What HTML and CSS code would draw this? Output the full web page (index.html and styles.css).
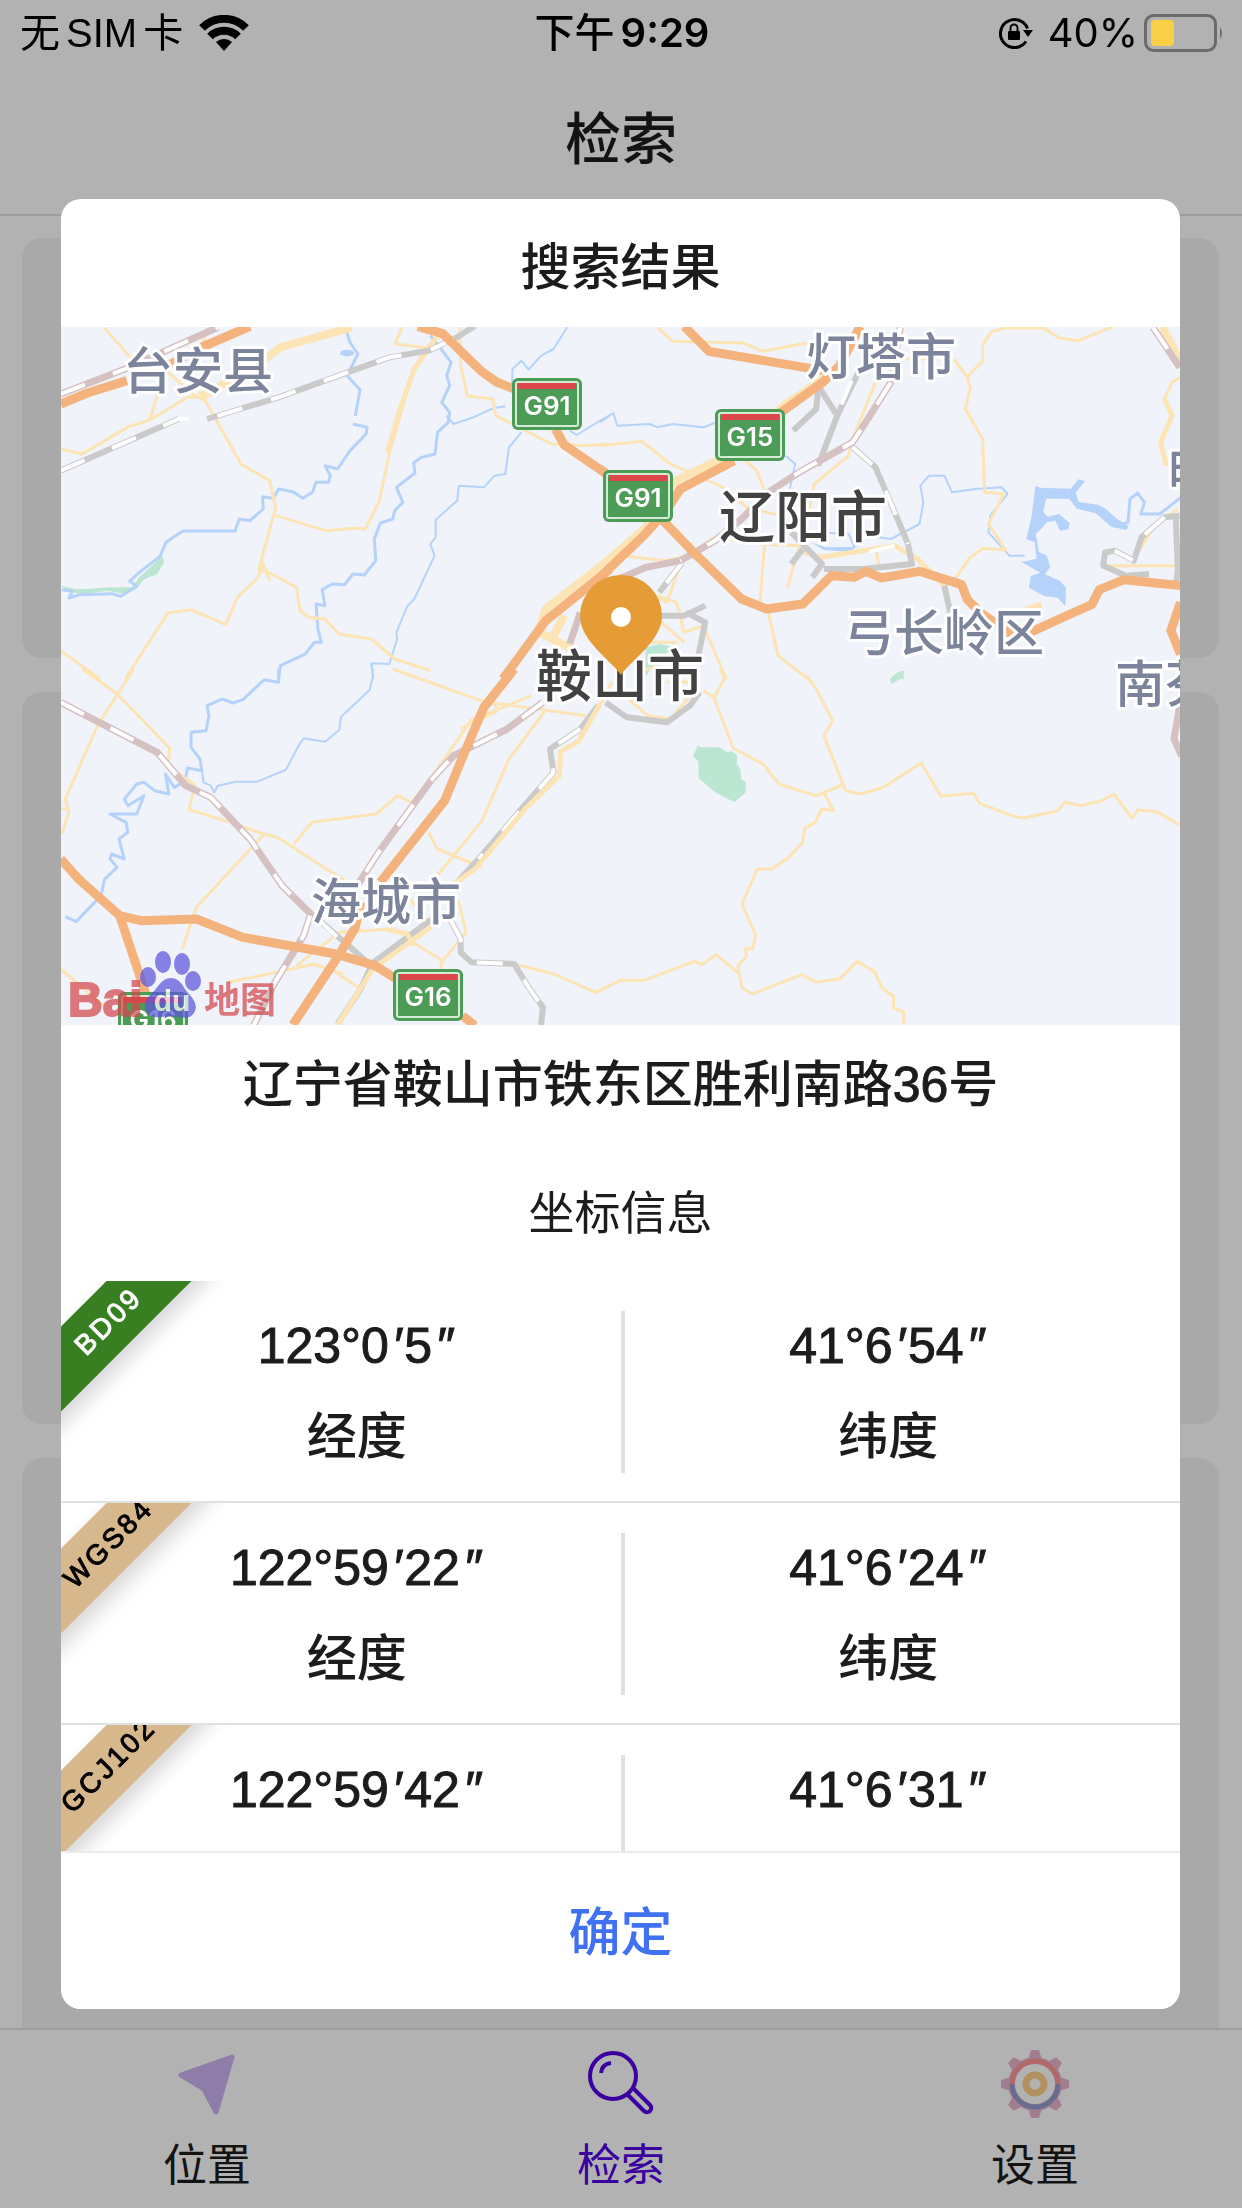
FILE: index.html
```html
<!DOCTYPE html>
<html lang="zh-CN">
<head>
<meta charset="utf-8">
<meta name="viewport" content="width=device-width, initial-scale=1">
<title>检索</title>
<link rel="stylesheet" href="styles.css">
</head>
<body>
<div class="screen">
  <div class="status">
    <div class="status-left">
      <span>无</span><span>SIM</span><span>卡</span>
      <svg class="wifi" viewBox="0 0 50 36" aria-hidden="true">
        <path d="M3 13a31 31 0 0 1 44 0M11 21.500a20 20 0 0 1 28 0" fill="none" stroke="#000" stroke-width="8"/>
        <path d="M25 36l-8-9a12 12 0 0 1 16 0z"/>
      </svg>
    </div>
    <div class="status-time"><span>下午</span><span class="latin">9:29</span></div>
    <div class="status-right">
      <svg class="lock" viewBox="0 0 36 32" aria-hidden="true">
        <path d="M28 24.500a14 14 0 1 1 1.500-13" fill="none" stroke="#000" stroke-width="3"/>
        <path d="M25 13h10l-5 7z"/>
        <rect x="10" y="14" width="12" height="9" rx="1"/>
        <path d="M12.500 15v-4a3.500 3.500 0 0 1 7 0v4" fill="none" stroke="#000" stroke-width="2"/>
      </svg>
      <span class="latin">40%</span>
      <svg class="battery" viewBox="0 0 80 38" aria-hidden="true">
        <rect x="1.500" y="1.500" width="70" height="35" rx="8" fill="none" stroke="#6b6b6b" stroke-width="3"/>
        <rect x="7" y="6" width="23" height="26" rx="4" fill="#f8cf45"/>
        <path d="M76 13q4 6 0 12z" fill="#6b6b6b"/>
      </svg>
    </div>
  </div>
  <header class="nav"><h1>检索</h1></header>
  <main class="cards">
    <section class="card card-short"></section>
    <section class="card card-tall"></section>
    <section class="card card-rest"></section>
  </main>
  <nav class="tabs">
    <a class="tab" href="#location">
      <svg viewBox="0 0 68 68" aria-hidden="true"><path d="M8 25L59 7L43 62L31 39z" fill="#ccb2f3" stroke="#ccb2f3" stroke-width="5" stroke-linejoin="round"/></svg>
      <span>位置</span>
    </a>
    <a class="tab tab-active" href="#search">
      <svg viewBox="0 0 68 68" fill="none" stroke="#5300e5" stroke-width="4" aria-hidden="true">
        <circle cx="26" cy="26" r="23"/>
        <path d="M14 23q1-9 10-10M40 44L57 61a4 4 0 0 0 6-6L46 38"/>
      </svg>
      <span>检索</span>
    </a>
    <a class="tab" href="#settings">
      <svg viewBox="0 0 68 68" aria-hidden="true">
        <g fill="#e7b4ce">
          <path d="M27 10L30 0h8l3 10v48l-3 10h-8l-3-10z"/>
          <path d="M27 10L30 0h8l3 10v48l-3 10h-8l-3-10z" transform="rotate(45 34 34)"/>
          <path d="M27 10L30 0h8l3 10v48l-3 10h-8l-3-10z" transform="rotate(90 34 34)"/>
          <path d="M27 10L30 0h8l3 10v48l-3 10h-8l-3-10z" transform="rotate(135 34 34)"/>
          <circle cx="34" cy="34" r="27"/>
        </g>
        <circle cx="34" cy="34" r="20" fill="#fff"/>
        <path d="M11 34a23 23 0 0 1 46 0" fill="none" stroke="#ff9696" stroke-width="5"/>
        <path d="M11 34a23 23 0 0 0 46 0" fill="none" stroke="#979ace" stroke-width="5"/>
        <circle cx="34" cy="34" r="9" fill="none" stroke="#ffd088" stroke-width="7"/>
      </svg>
      <span>设置</span>
    </a>
  </nav>
</div>

<div class="scrim">
  <div class="dialog" role="dialog" aria-modal="true" aria-labelledby="dialog-title">
    <h2 class="dialog-title" id="dialog-title">搜索结果</h2>
    <div class="dialog-body">
      <svg class="map" viewBox="61 328 1119 698" role="img" aria-label="地图">
        <!-- north-west tile -->
        <g class="tile" transform="translate(50 320) scale(.35714 .33333)">
          <path class="park" d="M30 800l40 10 30 0 70-5 60 0 20-30 50-50 15-15 5 20-20 35-35 15-25 30-30 15-50-10-60 10-40-5-20-12z"/>
          <path class="water" d="M828 30l12 40 22 35-30 65 36 42-13 78M848 315l40 10-3 20-45 50-35 55-35-10 15 30-5 20-35 0-10 30-27 18-28-20-40-8-15 28-30-5 2 37-37 35-30-5-12 36H372l-27 19-20 15-17 42-60 50-25 25 20 15-45 30-25-8-90 3-30 10 10-20-30-5"/>
          <path class="water" d="M1065 50l30 40 28 40-12 40 8 30-22 50 22 30-4 30-30 30-7 65-38 10-22 17 4 30-52 43 18 45-23 25-5 25-35 12-17 48 4 65-32 43-32-3-23 32-35-2-28 17 8 48-25-5 5 75 10 40-20 0-25 35-70 35-5 40"/>
          <path class="water thin" d="M1448 25l-38 65-35 20-35 42-20-27-25 25-2 60M1275 262l-35 6-55 27-55 20-20-25M1320 340l-35 45-10 80-30 5-30 35-70-5-5 45-60 57v53l-15 20 12 35-57 130-20 22-30 78 2 20-22 75-50-2 5 47M1455 335l20 13 45-30 48-30"/>
          <ellipse class="lake" cx="832" cy="102" rx="20" ry="10"/>
          <path class="road" d="M150 25l75 90 100 40 80 75 30 15 100 190 80 50 17 80-47 185 35 15 70 40 10 70 25 20 45 5 40 45 90 15 65 60 100 35M30 390l60 15 130-82 60-20 105-68h50M280 303l20-73M645 90l-30 20-130 85-70 30M425 80l17-55M985 25l-18 50 93 12M632 590l140 45 90-8 20 4 40-85 30-150 68-250 43-70M1148 25l2 115 18 90 72 10 8 50 157 85 85 5 78-5M583 775l12-45 20 55M583 775l-58 60-33 82-97-45-65 10-120 198M30 995l110 85"/>
          <path class="road wide" d="M425 235l190-125 30-25 200-60M1568 720l-180 150-20 65M1360 935l110 60M1400 970l40-80"/>
          <path class="road medium" d="M945 400l35-130 40-120 65-100"/>
          <path class="rail-red" d="M30 225l180-75 260-125"/><path class="rail-gap" d="M30 225l180-75 260-125"/>
          <path class="rail" d="M30 455l330-155M440 300l200-65 310-120 110-20 80-40 50-35"/><path class="rail-gap" d="M30 455l330-155h80l200-65 310-120 110-20 80-40 50-35"/>
          <path class="highway" d="M30 255l75-33 110-37M330 140l100-58 130-60M1030 22l70 22 105 110 45 35 60 25M1415 330l25 48 130 95"/>
          <path class="highway" d="M1568 750l-180 155-120 175"/>
          <path class="rail-red" d="M1485 880l-30 95"/>
        </g>
        <!-- north-east tile -->
        <g class="tile" transform="translate(600 320) scale(.38265 .33333)">
          <path class="water thin" d="M0 310l35-28 10 38 85-5 20 10 40-10 80 10 30-13M485 410l25 25-15 80 5 90M500 645l60-5 90 5 15 40M700 650l60 10 75-45 10-65-8-50 23-30h40l20 50 60-10 70-5 15 20-45 65-5 50 55 70 40 0"/>
          <path class="water" d="M1345 622l35-12 5-70 20-18 18 28-10 35 50 0 55-50"/>
          <path class="lake" d="M1138 500l12 6 80 3 20-28 18 5-25 35 8 28 50 8 20 12 30 30 30 22-5 12-40-10-40-40-50-14-20-30-60 0-8 40 12 14 30-8 28 28-4 18-22 4-12-30-22 4-14 20-15 15 8 55 20 10 10 35-14 22 40 20 15 20-2 55-20-25-35-5-40-25 5-35 25-10-50-32 40-10-5-50-22-8 14-70zM550 670l40 15 85-2-30 15-60-5z"/>
          <path class="road" d="M150 25l40 42 185 5 50 25 100-22 80-5M720 190l-60 170-10 50-90 85-20 110-50 200M0 380l110-13 70 65 145 75 60 60 80 20 60 50M380 425l30 30 20 60M60 710l110 15 60-15 70-55 120 20 110 5M430 680l-12 170 22 30 25 130 90 80M925 120l35 55 40-50v-50l25-38 35-10h100l40 30 50 8 90-42M960 175l8 30-13 65 45 90 5 160 50 5-40 90 45 78-60-5-35 30-45 75M800 120h80M1480 440l-15-70 30-80-20-50 20-50 22-15M1510 570l-60 50-60 110M1330 740h186M720 690l10 50M215 720l-40 130-90-60M150 830l50 20 20 90 50-20 60 160M100 850l120 120"/>
          <path class="road wide" d="M0 745l120-120 30-80 50-60 140-80 140-145 110-85M1115 875l40-15M1470 25l45 100"/>
          <path class="road medium" d="M530 700l50 15 190-35 60 40 70 80 10 40M1480 440l-15-70 30-80-20-50"/>
          <path class="rail" d="M570 200l50 90-50 150M570 210l-5 60-60 65M680 150l-60 140M660 385l60 60 45 120 40 110 10 60-130 15-100 0M500 640l80 95-25 40M530 690l-30 45M215 730l-60 90M160 890h60l55-30M225 880l50 30-20 110M1515 590l-40 5-60 60-20 70-50-30-25 5-5 40 60 30 60-5M1505 600l5 150-5 50M900 800l15 80"/>
          <path class="rail-gap" d="M715 30l-100 270M660 385l60 60 45 120 40 110M770 680l-130 35M215 730l-60 90M1475 595l-60 60-20 70-50-30"/>
          <path class="rail-red" d="M785 25l-25 165-60 110-40 70-140 90-80 60-70 80-70 65-90 60-90 20-80 40M1445 25l70 120"/>
          <path class="rail-gap" d="M785 25l-25 165-60 110-40 70-140 90-80 60-70 80-70 65-90 60M1445 25l70 120"/>
          <path class="highway" d="M220 22l65 75 310 60M680 22l-55 120-40 45-120 100M350 425l-140 85-40 70-60 75-110 120M0 450l30 25M165 605l75 90 130 145 65 30 95-15 75-85 60 5 30-18 40 20 100-20 110 40 15 45 35 40 75 60 60-5 105-55 50-25 20-45 65-30 165 20 15 15M1517 850l-25 85 25 70"/>
          <path class="park" d="M120 985l35-10 40 10-30 25 10 25-40 10-20 35zM760 1075l30-20 5 25z"/>
          <path class="road" d="M0 900l60 20 60 50 80 0M60 1000l60-30M100 1060l50-20"/>
        </g>
        <!-- south-west tile -->
        <g class="tile" transform="translate(50 670) scale(.35714 .33333)">
          <path class="water" d="M640 0v40l-40-8-60 60-28 10-30-12-42 20 5 30-8 45-42 5 0 45 25 35 5 35-40-8-7 40-30 18-25-40 10 60-40-10-30-25-20 5-35 45 10 20 45-30-20 55-75 0 45 25 5 30-25 20 15 60-35-15-5 15 20 25-35 35-10 50-70 78-30-15"/>
          <path class="water thin" d="M425 300l5 40 20 10 10 20 10-20 50-12 60 0 80-35 40-80 10-15 60 10 40-35 5-40 80-80 10-45-5-33"/>
          <path class="road" d="M90 0l95 72 150 165-5 55 75 55-15 75 120 40 80 30 50 15 195 135M235 0l-45 75-55 90-92 225 10 40-20 65M30 420h20M600 495l-190 220-40 125M683 525l50-65 180-25 60-55 40 20 75-105 90-140 170-75M960 0l255 98 285 42M1215 98l35 10 0 20-100 50M1390 120l-105 150-75 185-130 170M1060 490l25 50 125 55M30 900l120 110M500 940l240-55 80 30M690 890l120-100 150-10M800 910l70 50M1000 810l100 65 65-85-20-90-45-20M1095 870v30M1300 885l110 30 118 55 40-20M1000 680l60 80"/>
          <path class="rail-red" d="M30 100l270 150 80 100 70 35 110 125 90 140 80 85-20 65-80 140-60 130M1380 100l-100 80-150 80-60 70-150 220-60 100"/>
          <path class="rail-gap" d="M30 100l270 150 80 100 70 35 110 125 90 140 80 85-20 65-80 140-60 130M1380 100l-100 80-150 80-60 70-150 220-60 100"/>
          <path class="rail" d="M1535 110l-50 70-85 60 10 70-90 110-120 150-60 70M750 750l150 140-30 70-65 105M900 885l170-135M1120 750l30 60 0 40 30 30 120 5 40 70 40 60-5 53"/>
          <path class="rail-gap" d="M1485 180l-85 60 10 70-90 110-120 150M1120 750l30 60 0 40 30 30 120 5 40 70 40 60-5 53M750 750l60 60"/>
          <path class="road medium" d="M805 1068l100-170 170-130M1540 105l-60 112-50 30-4 73-96 100-140 180-80 60M940 780l60 15 20 35"/>
          <path class="highway" d="M1300 0l-85 115-60 150-50 130-180 245M870 700l-15 75-50 90-125 202M30 570l50 60 115 110 60 15 155-5 130 55 260 50 110 35 60 40M1155 1040l35 30M195 740l75 240"/>
        </g>
        <!-- south-east tile -->
        <g class="tile" transform="translate(600 670) scale(.38265 .33333)">
          <path class="park" d="M257 227l5 8h50l20 15 12-3 15 13-2 25 10 15 2 30 12 10v30l-30 30-50-30-43-42-1-50-14-18zM758 30l20-20 17-5-3 20-30 20z"/>
          <path class="road" d="M510 0l35 28 20 32 43 95-23 45 50 145 8 20 38 10 60-20 98-73 52 100 85-9 16 30 90 39 25 5 90-22 18-25 40 10 56-15 32-20 48 73 14-25 50 5 68 45M635 348l-50 22 25 55-30-5-18 40-27 18-5 42-38 46-43 34h-38l-40 105 36 95-8 38-20 3 4 20-22 28 2 25-60-57-37 30-20-10-130 57H52L-10 970M363 914l9 43 25 18 130-58 38 22 62-10 45-52 45 30 20 50 30 25v35l27 12v37M585 372l-22 8-95-35-42-60-78-48-50-150 28-60-12-27M270 65l28 20M75 90l50 50 60 10 55-75M0 110l30-70M175 40h60v-30"/>
          <path class="rail" d="M15 100l55 45 105 15 60-50 25-40"/>
          <path class="rail-red" d="M1515 110l-15 100 20 50"/>
        </g>

        <g class="shield" transform="translate(512 379)"><rect width="70" height="52" rx="6"/><rect class="shield-line" x="4" y="4" width="62" height="44" rx="2"/><path d="M6 5h58v6H6z"/><text x="35" y="37">G91</text></g>
        <g class="shield" transform="translate(715 410)"><rect width="70" height="52" rx="6"/><rect class="shield-line" x="4" y="4" width="62" height="44" rx="2"/><path d="M6 5h58v6H6z"/><text x="35" y="37">G15</text></g>
        <g class="shield" transform="translate(603 471)"><rect width="70" height="52" rx="6"/><rect class="shield-line" x="4" y="4" width="62" height="44" rx="2"/><path d="M6 5h58v6H6z"/><text x="35" y="37">G91</text></g>
        <g class="shield" transform="translate(393 970)"><rect width="70" height="52" rx="6"/><rect class="shield-line" x="4" y="4" width="62" height="44" rx="2"/><path d="M6 5h58v6H6z"/><text x="35" y="37">G16</text></g>
        <g class="shield" transform="translate(118 993)"><rect width="70" height="52" rx="6"/><rect class="shield-line" x="4" y="4" width="62" height="44" rx="2"/><path d="M6 5h58v6H6z"/><text x="35" y="37">G16</text></g>

        <g class="place">
          <text x="198" y="390">台安县</text>
          <text x="881" y="376">灯塔市</text>
          <text x="944" y="652">弓长岭区</text>
          <text x="386" y="921">海城市</text>
          <text x="1165" y="703">南芬</text>
          <text x="1243" y="492">明山区</text>
        </g>
        <g class="place place-city">
          <text x="803" y="538">辽阳市</text>
          <text x="620" y="697">鞍山市</text>
        </g>

        <g class="brand">
          <text x="68" y="1017" class="brand-latin">Bai</text>
          <g fill="#5b55dc">
            <ellipse cx="148" cy="978" rx="8" ry="10"/><ellipse cx="163" cy="963" rx="8" ry="11"/><ellipse cx="182" cy="965" rx="8" ry="11"/><ellipse cx="193" cy="982" rx="8" ry="10"/>
            <path d="M171 979c10 0 12 10 18 16s9 13 5 19-10 5-16 4-10-1-16 0-13 0-16-6 0-13 6-18 9-15 19-15z"/>
          </g>
          <text x="172" y="1012" class="brand-du">du</text>
          <text x="204" y="1014" class="brand-cn">地图</text>
        </g>

        <path d="M621 676C612 662 580 642 580 617a41 41 0 0 1 82 0C662 642 630 662 621 676z" fill="#e59c37"/>
        <circle cx="621" cy="618" r="10" fill="#fff"/>
      </svg>
      <p class="address">辽宁省鞍山市铁东区胜利南路<span class="medium">36</span>号</p>
      <h3 class="section-title">坐标信息</h3>
      <div class="coord">
        <span class="ribbon ribbon-main">BD09</span>
        <dl class="cell"><dd>123°0<i>′</i>5<i>″</i></dd><dt>经度</dt></dl>
        <dl class="cell"><dd>41°6<i>′</i>54<i>″</i></dd><dt>纬度</dt></dl>
      </div>
      <div class="coord">
        <span class="ribbon">WGS84</span>
        <dl class="cell"><dd>122°59<i>′</i>22<i>″</i></dd><dt>经度</dt></dl>
        <dl class="cell"><dd>41°6<i>′</i>24<i>″</i></dd><dt>纬度</dt></dl>
      </div>
      <div class="coord">
        <span class="ribbon">GCJ102</span>
        <dl class="cell"><dd>122°59<i>′</i>42<i>″</i></dd><dt>经度</dt></dl>
        <dl class="cell"><dd>41°6<i>′</i>31<i>″</i></dd><dt>纬度</dt></dl>
      </div>
    </div>
    <button class="confirm" type="button">确定</button>
  </div>
</div>
</body>
</html>
```
FILE: styles.css
```css
* { box-sizing: border-box; }

body, h1, h2, h3, p, dl, dd { margin: 0; }

body {
  font-family: "Liberation Sans", "Noto Sans CJK SC", sans-serif;
  color: #1c1c1c;
  background: #fff;
}

.screen {
  display: flex;
  flex-direction: column;
  height: 100vh;
}

/* Status bar stays above the scrim */
.status {
  position: relative;
  z-index: 2;
  flex: none;
  display: grid;
  grid-template-columns: 1fr auto 1fr;
  align-items: center;
  height: 66px;
  padding: 0 18px 0 20px;
  font-size: 40px;
  line-height: 60px;
  color: #000;
}

.status-left, .status-time, .status-right {
  display: flex;
  align-items: center;
  gap: 6px;
}

.status-right { justify-content: flex-end; }
.status-time { font-weight: 500; }
.status-time .latin { font-weight: 600; }
.latin { font-family: Inter, sans-serif; }
.wifi { width: 50px; height: 36px; margin-left: 10px; }
.lock { width: 36px; height: 32px; margin-right: 8px; }
.battery { width: 80px; height: 38px; }

.nav {
  flex: none;
  display: flex;
  align-items: center;
  justify-content: center;
  height: 150px;
  border-bottom: 2px solid #e2e2e2;
}

.nav h1 {
  font-size: 56px;
  font-weight: 500;
  line-height: 80px;
}

.cards {
  flex: 1;
  min-height: 0;
  overflow: hidden;
  display: flex;
  flex-direction: column;
  gap: 34px;
  padding: 22px 23px 0 22px;
}

.card {
  flex: none;
  border-radius: 20px;
  background: #f3f3f3;
}

.card-short { height: 420px; }
.card-tall { height: 732px; }
.card-rest { height: 600px; }

.tabs {
  flex: none;
  display: flex;
  height: 180px;
  padding-top: 20px;
  border-top: 2px solid #e2e2e2;
  background: #fff;
}

.tab {
  flex: 1;
  display: flex;
  flex-direction: column;
  align-items: center;
  gap: 18px;
  font-size: 44px;
  line-height: 60px;
  color: #1c1c1c;
  text-decoration: none;
}

.tab svg { width: 68px; height: 68px; }
.tab-active { color: #5300e5; }

.scrim {
  position: fixed;
  inset: 0;
  z-index: 1;
  display: flex;
  align-items: center;
  justify-content: center;
  padding: 0 62px 0 61px;
  background: rgba(0, 0, 0, .3);
}

.dialog {
  display: flex;
  flex-direction: column;
  width: 100%;
  max-height: 82vh;
  overflow: hidden;
  border-radius: 20px;
  background: #fff;
}

.dialog-title {
  flex: none;
  height: 128px;
  padding-top: 4px;
  font-size: 50px;
  font-weight: 500;
  line-height: 130px;
  text-align: center;
}

.dialog-body {
  flex: 1;
  min-height: 0;
  overflow-y: auto;
  scrollbar-width: none;
}

.address {
  font-size: 50px;
  font-weight: 500;
  line-height: 120px;
  text-align: center;
}

.medium { -webkit-text-stroke: 1px currentColor; }

.section-title {
  font-size: 46px;
  font-weight: 400;
  line-height: 136px;
  text-align: center;
}

.coord {
  position: relative;
  overflow: hidden;
  display: flex;
  padding: 30px 28px 28px 32px;
  border-bottom: 2px solid #dde1e2;
}

.cell {
  flex: 1;
  display: flex;
  flex-direction: column;
  gap: 20px;
  font-size: 50px;
  font-weight: 500;
  line-height: 71px;
  text-align: center;
}

.cell dd { -webkit-text-stroke: 1px currentColor; }
.cell dd i { padding: 0 3px; }
.cell + .cell { border-left: 4px solid #dde1e2; }

.ribbon {
  position: absolute;
  top: 14px;
  left: -76px;
  width: 240px;
  padding-left: 10px;
  font-size: 28px;
  line-height: 60px;
  letter-spacing: 3px;
  text-align: center;
  color: #000;
  background: #d7b88c;
  box-shadow: 0 10px 20px rgba(0, 0, 0, .16);
  -webkit-text-stroke: 1px currentColor;
  transform: rotate(-45deg);
}

.ribbon-main {
  color: #fff;
  background: #377f20;
}

.confirm {
  flex: none;
  height: 158px;
  padding: 0 0 6px;
  border: 0;
  border-top: 2px solid #ebebeb;
  background: #fff;
  font: 500 52px "Noto Sans CJK SC", sans-serif;
  color: #4071f2;
}

/* Map */
.map {
  display: block;
  width: 100%;
  height: auto;
  background: #f0f3fa;
}

.tile path {
  fill: none;
  stroke-linejoin: round;
  vector-effect: non-scaling-stroke;
}

.tile .water { stroke: #b5d3fa; stroke-width: 3px; }
.tile .thin { stroke-width: 2px; }
.tile .lake { fill: #b5d3fa; }
.tile .park { fill: #bbe7d2; }
.tile .road { stroke: #fce4b4; stroke-width: 3px; }
.tile .medium { stroke-width: 5px; }
.tile .wide { stroke-width: 8px; }
.tile .highway { stroke: #f4b37c; stroke-width: 9px; }
.tile .rail { stroke: #cacaca; stroke-width: 6px; }
.tile .rail-red { stroke: #d5c0c2; stroke-width: 7px; }
.tile .rail-gap { stroke: #fff; stroke-width: 4px; stroke-dasharray: 26px 30px; }

.shield rect { fill: #4c9b57; }
.shield .shield-line { fill: none; stroke: #d4ecd6; stroke-width: 2px; }
.shield path { fill: #dd4749; }

.shield text {
  font: 600 26px Inter, sans-serif;
  fill: #fff;
  text-anchor: middle;
}

.place text {
  font: 500 50px "Noto Sans CJK SC", sans-serif;
  fill: #7b849a;
  stroke: #fff;
  stroke-width: 6px;
  stroke-linejoin: round;
  paint-order: stroke;
  text-anchor: middle;
}

.place-city text {
  font-size: 56px;
  fill: #424242;
}

.brand { opacity: .72; }
.brand text { font-weight: 700; fill: #d4484d; }
.brand .brand-latin { font-size: 48px; stroke: #d4484d; stroke-width: 2px; }
.brand .brand-du { font-size: 30px; fill: #fff; text-anchor: middle; }
.brand-cn { font-size: 36px; }
```
